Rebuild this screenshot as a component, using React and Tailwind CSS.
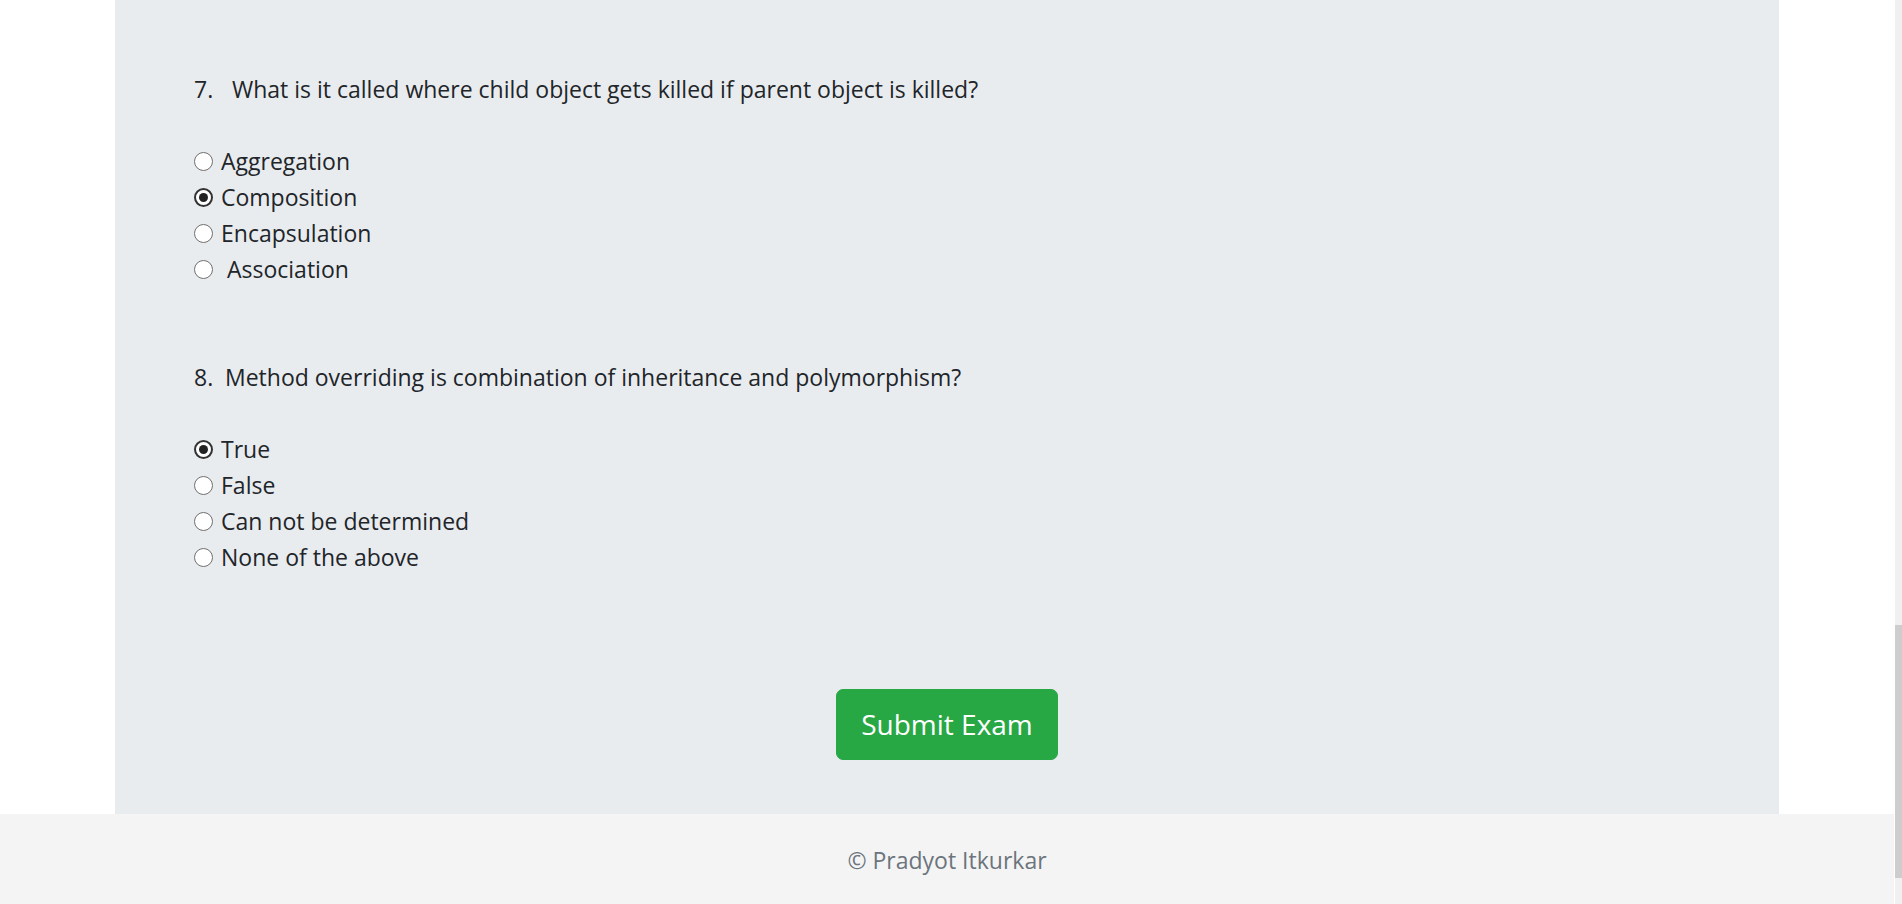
import React from "react";

const questions = [
  {
    no: "7.",
    noWidth: "w-[38px]",
    text: "What is it called where child object gets killed if parent object is killed?",
    options: ["Aggregation", "Composition", "Encapsulation", " Association"],
    picked: 1,
  },
  {
    no: "8.",
    noWidth: "w-[31px]",
    text: "Method overriding is combination of inheritance and polymorphism?",
    options: ["True", "False", "Can not be determined", "None of the above"],
    picked: 0,
  },
];

const Radio = ({ checked }) =>
  checked ? (
    <span className="flex h-[19px] w-[19px] shrink-0 items-center justify-center rounded-full border-2 border-[#333333] bg-white">
      <span className="h-[9px] w-[9px] rounded-full bg-[#222222]" />
    </span>
  ) : (
    <span className="h-[19px] w-[19px] shrink-0 rounded-full border border-[#707070] bg-white" />
  );

const Question = ({ q, last }) => (
  <div className={last ? "" : "mb-[72px]"}>
    <div className="flex h-[36px] items-center">
      <span className={`${q.noWidth} shrink-0`}>{q.no}</span>
      <span>{q.text}</span>
    </div>
    <div className="mt-[36px]">
      {q.options.map((opt, i) => (
        <label key={i} className="flex h-[36px] items-center">
          <Radio checked={i === q.picked} />
          <span className="ml-[8px] whitespace-pre">{opt}</span>
        </label>
      ))}
    </div>
  </div>
);

const App = () => {
  return (
    <div
      className="flex h-[904px] w-full overflow-hidden bg-white text-[23px] leading-[36px] text-[#212529]"
      style={{ fontFamily: '"Open Sans", "Noto Sans", sans-serif' }}
    >
      <div className="flex min-w-0 flex-1 flex-col">
        <div className="flex-1 px-[115px]">
          <div className="h-full bg-[#e9ecef] pl-[79px] pt-[71px]">
            {questions.map((q, i) => (
              <Question key={q.no} q={q} last={i === questions.length - 1} />
            ))}
            <div className="mt-[114px] flex justify-center pr-[79px]">
              <button className="h-[71px] w-[222px] rounded-[7px] border border-[#28a745] bg-[#28a745] text-[28px] leading-[45px] text-white">
                Submit Exam
              </button>
            </div>
          </div>
        </div>
        <footer className="flex h-[90px] items-center justify-center bg-[#f4f4f4] pt-[2px] text-[#6c757d]">
          © Pradyot Itkurkar
        </footer>
      </div>
      <div className="w-[8px] shrink-0 bg-white pl-[1px]">
        <div className="flex h-full flex-col bg-[#f0f0f0]">
          <div className="mt-[625px] h-[253px] bg-[#cdcdcd]" />
        </div>
      </div>
    </div>
  );
};

export default App;
